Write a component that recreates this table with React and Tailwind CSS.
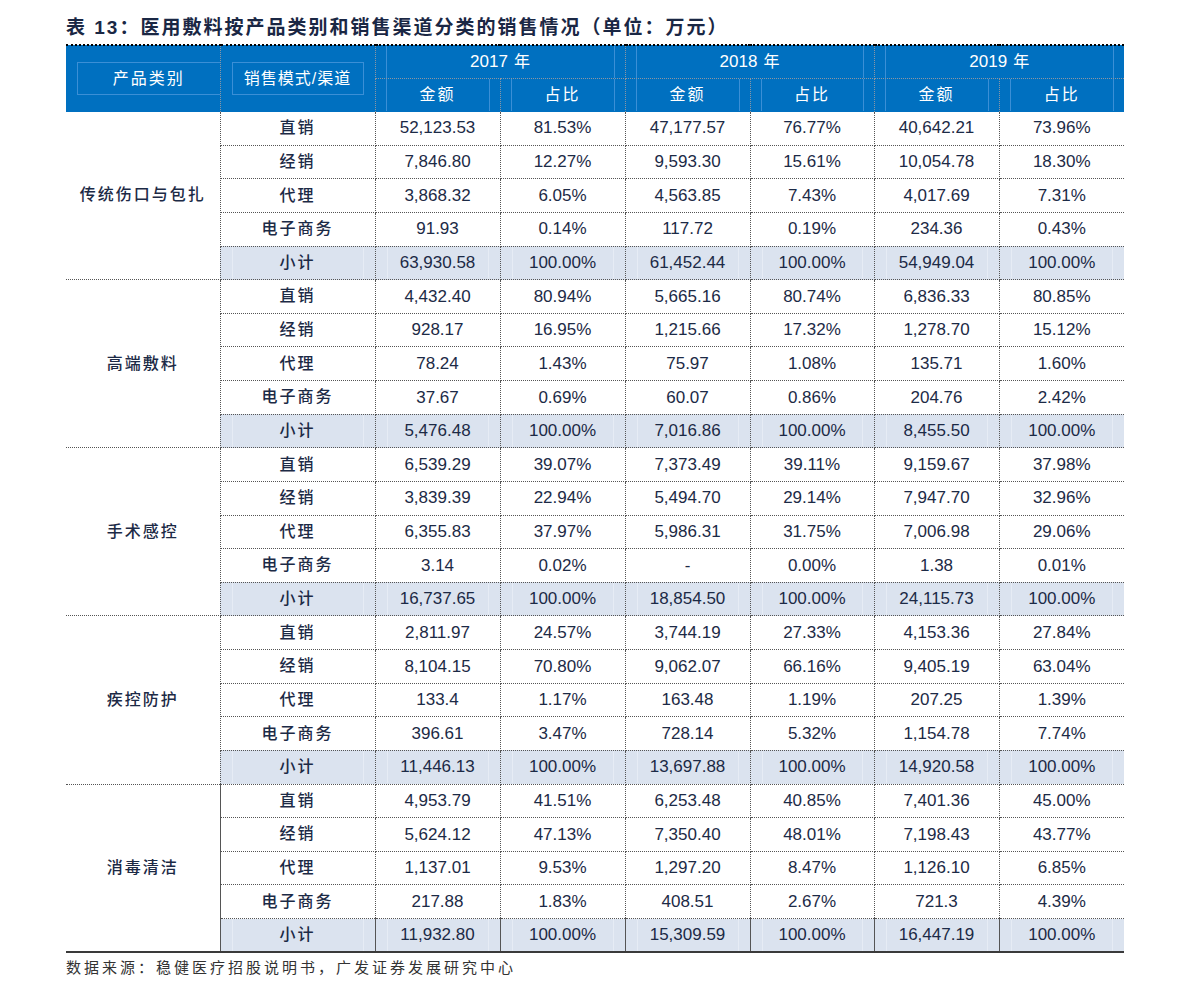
import React from "react";

const groups = [
  {
    name: "传统伤口与包扎",
    rows: [
      ["直销", "52,123.53", "81.53%", "47,177.57", "76.77%", "40,642.21", "73.96%"],
      ["经销", "7,846.80", "12.27%", "9,593.30", "15.61%", "10,054.78", "18.30%"],
      ["代理", "3,868.32", "6.05%", "4,563.85", "7.43%", "4,017.69", "7.31%"],
      ["电子商务", "91.93", "0.14%", "117.72", "0.19%", "234.36", "0.43%"],
      ["小计", "63,930.58", "100.00%", "61,452.44", "100.00%", "54,949.04", "100.00%"],
    ],
  },
  {
    name: "高端敷料",
    rows: [
      ["直销", "4,432.40", "80.94%", "5,665.16", "80.74%", "6,836.33", "80.85%"],
      ["经销", "928.17", "16.95%", "1,215.66", "17.32%", "1,278.70", "15.12%"],
      ["代理", "78.24", "1.43%", "75.97", "1.08%", "135.71", "1.60%"],
      ["电子商务", "37.67", "0.69%", "60.07", "0.86%", "204.76", "2.42%"],
      ["小计", "5,476.48", "100.00%", "7,016.86", "100.00%", "8,455.50", "100.00%"],
    ],
  },
  {
    name: "手术感控",
    rows: [
      ["直销", "6,539.29", "39.07%", "7,373.49", "39.11%", "9,159.67", "37.98%"],
      ["经销", "3,839.39", "22.94%", "5,494.70", "29.14%", "7,947.70", "32.96%"],
      ["代理", "6,355.83", "37.97%", "5,986.31", "31.75%", "7,006.98", "29.06%"],
      ["电子商务", "3.14", "0.02%", "-", "0.00%", "1.38", "0.01%"],
      ["小计", "16,737.65", "100.00%", "18,854.50", "100.00%", "24,115.73", "100.00%"],
    ],
  },
  {
    name: "疾控防护",
    rows: [
      ["直销", "2,811.97", "24.57%", "3,744.19", "27.33%", "4,153.36", "27.84%"],
      ["经销", "8,104.15", "70.80%", "9,062.07", "66.16%", "9,405.19", "63.04%"],
      ["代理", "133.4", "1.17%", "163.48", "1.19%", "207.25", "1.39%"],
      ["电子商务", "396.61", "3.47%", "728.14", "5.32%", "1,154.78", "7.74%"],
      ["小计", "11,446.13", "100.00%", "13,697.88", "100.00%", "14,920.58", "100.00%"],
    ],
  },
  {
    name: "消毒清洁",
    rows: [
      ["直销", "4,953.79", "41.51%", "6,253.48", "40.85%", "7,401.36", "45.00%"],
      ["经销", "5,624.12", "47.13%", "7,350.40", "48.01%", "7,198.43", "43.77%"],
      ["代理", "1,137.01", "9.53%", "1,297.20", "8.47%", "1,126.10", "6.85%"],
      ["电子商务", "217.88", "1.83%", "408.51", "2.67%", "721.3", "4.39%"],
      ["小计", "11,932.80", "100.00%", "15,309.59", "100.00%", "16,447.19", "100.00%"],
    ],
  },
];

const years = ["2017", "2018", "2019"];

function HeadBox({ children, className = "" }) {
  return (
    <div
      className={
        "mx-[10px] h-[32px] border-x border-[#3b8fd6] flex items-center justify-center " +
        className
      }
    >
      {children}
    </div>
  );
}

export default function App() {
  return (
    <div className="min-h-[998px] bg-white pl-[66px] pt-[16px] font-['Liberation_Sans','Noto_Sans_CJK_SC',sans-serif] text-[#1c2a46]">
      <h1 className="h-[28px] text-[19px] font-bold tracking-[2px] leading-[24px] text-[#1a2744]">
        表 13：医用敷料按产品类别和销售渠道分类的销售情况（单位：万元）
      </h1>

      <table className="table-fixed border-collapse w-[1058px]">
        <colgroup>
          <col className="w-[154px]" />
          <col className="w-[155px]" />
          <col className="w-[125px]" />
          <col className="w-[125px]" />
          <col className="w-[125px]" />
          <col className="w-[124px]" />
          <col className="w-[125px]" />
          <col className="w-[125px]" />
        </colgroup>
        <thead className="text-white font-normal">
          <tr className="h-[33px]">
            <th
              rowSpan={2}
              className="bg-[#0070c0] border-t-2 border-t-black border-r border-r-[#8c96a3] border-dotted p-0 font-normal text-[16px] tracking-[2px]"
            >
              <div className="ml-[11px] h-[33px] border-y border-l border-[#3b8fd6] flex items-center justify-center">
                产品类别
              </div>
            </th>
            <th
              rowSpan={2}
              className="bg-[#0070c0] border-t-2 border-t-black border-r border-r-[#8c96a3] border-dotted p-0 font-normal text-[16px] tracking-[1px]"
            >
              <div className="mx-[11px] h-[33px] border border-[#3b8fd6] flex items-center justify-center">
                销售模式/渠道
              </div>
            </th>
            {years.map((y, i) => (
              <th
                key={y}
                colSpan={2}
                className={
                  "bg-[#0070c0] border-t-2 border-t-black border-b border-b-[#8c96a3] border-dotted p-0 font-normal text-[17px] " +
                  (i < 2 ? "border-r border-r-[#8c96a3]" : "")
                }
              >
                <HeadBox>
                  {y}
                  <span className="ml-[6px] text-[16px]">年</span>
                </HeadBox>
              </th>
            ))}
          </tr>
          <tr className="h-[33px]">
            {years.map((y, i) =>
              ["金额", "占比"].map((l, j) => (
                <th
                  key={y + l}
                  className={
                    "bg-[#0070c0] border-dotted p-0 font-normal text-[16px] tracking-[2px] " +
                    (i < 2 || j === 0 ? "border-r border-r-[#8c96a3]" : "")
                  }
                >
                  <HeadBox>{l}</HeadBox>
                </th>
              ))
            )}
          </tr>
        </thead>
        <tbody>
          {groups.map((g, gi) =>
            g.rows.map((r, ri) => {
              const sub = ri === 4;
              const lastRow = gi === groups.length - 1 && sub;
              return (
                <tr key={g.name + ri} className="h-[33.64px]">
                  {ri === 0 && (
                    <td
                      rowSpan={5}
                      className={
                        "border-r border-dotted border-[#555] text-center text-[16px] font-medium tracking-[2px] p-0 " +
                        (gi === groups.length - 1
                          ? "border-b-2 border-b-[#3a3a3a] border-solid"
                          : "border-b")
                      }
                    >
                      {g.name}
                    </td>
                  )}
                  {r.map((c, ci) => (
                    <td
                      key={ci}
                      className={
                        "p-0 text-center border-dotted border-[#555] " +
                        (ci < 6 ? "border-r " : "") +
                        (lastRow
                          ? "border-b-2 border-b-[#3a3a3a] border-solid "
                          : "border-b ") +
                        (sub ? "bg-[#dbe3ef] " : "") +
                        (ci === 0
                          ? "text-[16px] font-medium tracking-[2px]"
                          : "text-[17px]")
                      }
                    >
                      {sub ? (
                        <div className="mx-[11px] h-[32px] border-x border-[#e6ecf5] flex items-center justify-center">
                          {c}
                        </div>
                      ) : (
                        c
                      )}
                    </td>
                  ))}
                </tr>
              );
            })
          )}
        </tbody>
      </table>

      <p className="mt-[4px] text-[15px] tracking-[3px] text-[#333]">
        数据来源：稳健医疗招股说明书，广发证券发展研究中心
      </p>
    </div>
  );
}
